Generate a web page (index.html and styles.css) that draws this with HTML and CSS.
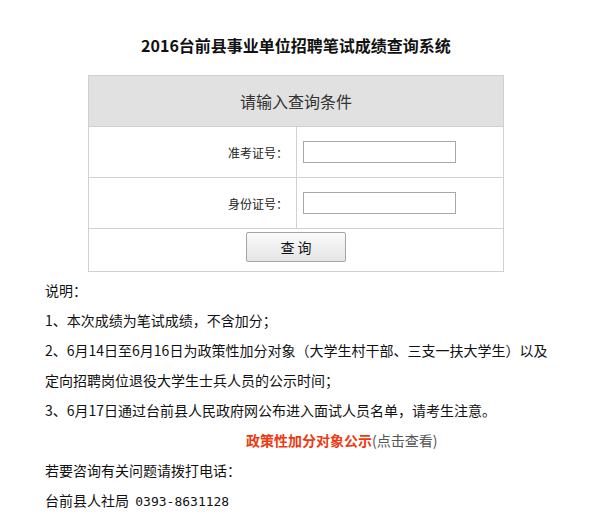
FILE: index.html
```html
<!DOCTYPE html>
<html lang="zh-CN">
<head>
  <meta charset="UTF-8" />
  <title>2016台前县事业单位招聘笔试成绩查询系统</title>
  <link rel="stylesheet" href="styles.css">
</head>
<body>
  <div class="wrap">
    <h1 class="title">2016台前县事业单位招聘笔试成绩查询系统</h1>

    <table class="query">
      <tr>
        <th colspan="2">请输入查询条件</th>
      </tr>
      <tr>
        <td class="label">准考证号：</td>
        <td class="field"><input type="text" /></td>
      </tr>
      <tr>
        <td class="label">身份证号：</td>
        <td class="field"><input type="text" /></td>
      </tr>
      <tr>
        <td colspan="2" class="submit"><button type="button">查 询</button></td>
      </tr>
    </table>

    <div class="notes">
      <p>说明：</p>
      <p>1、本次成绩为笔试成绩，不含加分；</p>
      <p>2、6月14日至6月16日为政策性加分对象（大学生村干部、三支一扶大学生）以及定向招聘岗位退役大学生士兵人员的公示时间；</p>
      <p>3、6月17日通过台前县人民政府网公布进入面试人员名单，请考生注意。</p>
      <p class="link"><a href="#">政策性加分对象公示</a>(点击查看)</p>
      <p>若要咨询有关问题请拨打电话：</p>
      <p>台前县人社局&nbsp; <span class="tel">0393-8631128</span></p>
    </div>
  </div>
</body>
</html>
```

FILE: styles.css
```css
* { margin:0; padding:0; box-sizing:border-box }
body {
  font-family:"Noto Sans CJK SC","DejaVu Sans",sans-serif;
  color:#000;
  background:#fff;
}
.wrap { width:502px; margin:0 auto; padding-top:33px }

.title {
  font-size:16px; font-weight:bold; text-align:center;
  line-height:24px; color:#111;
}

.query {
  width:416px; margin:18px auto 0;
  border-collapse:collapse;
  border:1px solid #d0d0d0;
}
.query th {
  height:51px; background:#e1e1e1;
  font-size:16px; font-weight:normal; color:#333;
  border:1px solid #d0d0d0;
}
.query td { border:1px solid #d0d0d0; height:51px }
.query .label {
  width:208px; text-align:right; padding-right:8px;
  font-size:12px; color:#222;
}
.query .field { padding-left:6px }
.query input {
  display:block; width:153px; height:22px;
  border:1px solid #a8a8a8; outline:none;
}
.query .submit { height:43px; text-align:center; padding-bottom:6px }
.query button {
  width:100px; height:30px;
  font-family:inherit; font-size:14px; color:#111;
  background:linear-gradient(#fbfbfb,#e4e4e4);
  border:1px solid #a5a5a5; border-radius:2px;
}

.notes { width:515px; padding-top:3px }
.notes p { font-size:14px; line-height:30px; color:#111 }
.notes .link { padding-left:201px; color:#555 }
.notes .link a { color:#ec3a12; font-weight:bold; text-decoration:none }
.notes .tel { font-family:"DejaVu Sans Mono",monospace; font-size:13px }
```
